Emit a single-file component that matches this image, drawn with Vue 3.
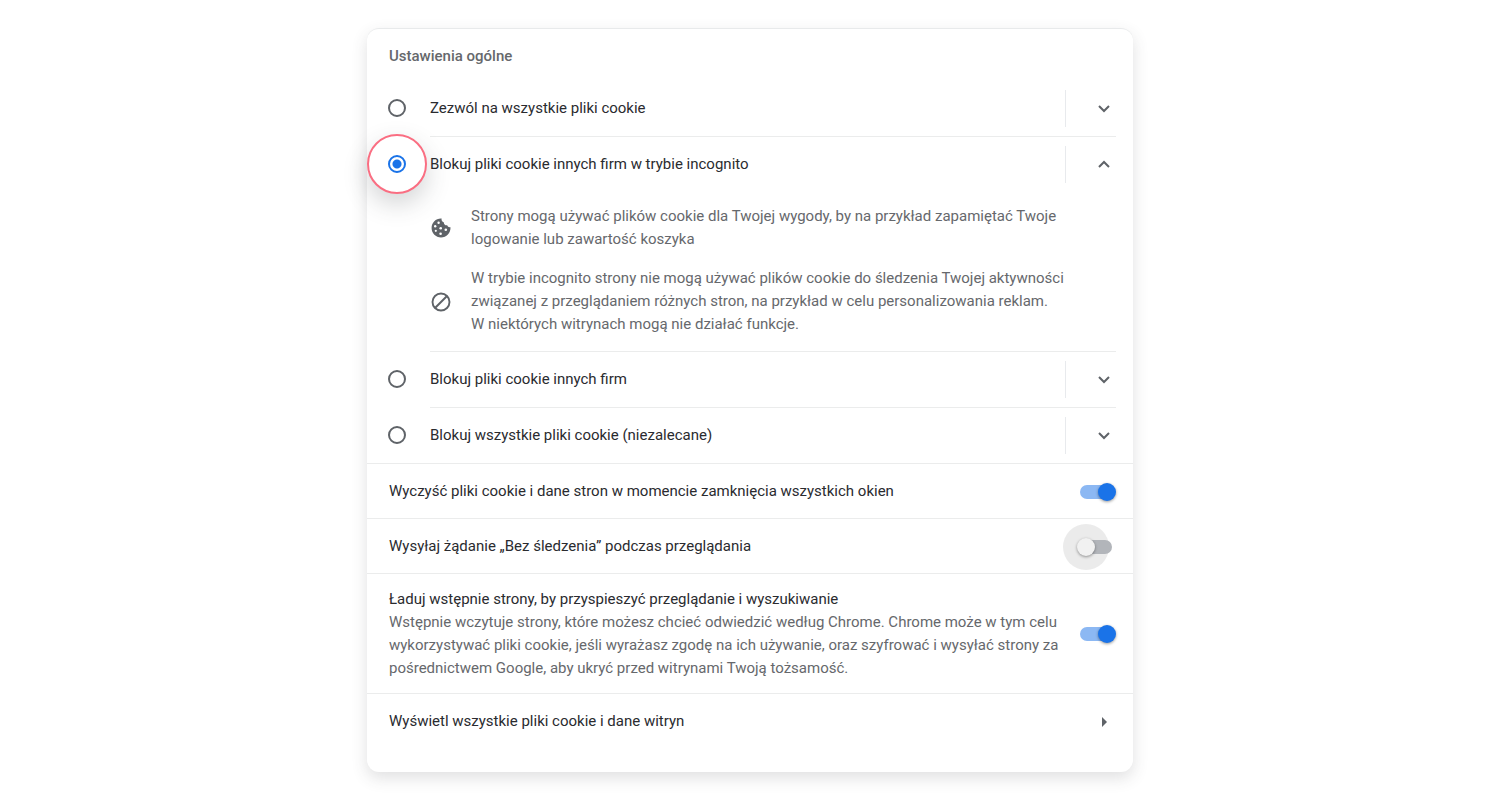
<script setup>
import { ref } from 'vue'

const selected = ref('incognito')
const expanded = ref('incognito')

const options = [
  { id: 'all', label: 'Zezwól na wszystkie pliki cookie' },
  {
    id: 'incognito',
    label: 'Blokuj pliki cookie innych firm w trybie incognito',
    details: [
      {
        icon: 'cookie',
        lines: [
          'Strony mogą używać plików cookie dla Twojej wygody, by na przykład zapamiętać Twoje',
          'logowanie lub zawartość koszyka',
        ],
      },
      {
        icon: 'block',
        lines: [
          'W trybie incognito strony nie mogą używać plików cookie do śledzenia Twojej aktywności',
          'związanej z przeglądaniem różnych stron, na przykład w celu personalizowania reklam.',
          'W niektórych witrynach mogą nie działać funkcje.',
        ],
      },
    ],
  },
  { id: 'third-party', label: 'Blokuj pliki cookie innych firm' },
  { id: 'none', label: 'Blokuj wszystkie pliki cookie (niezalecane)' },
]

const toggles = ref([
  { id: 'clear', label: 'Wyczyść pliki cookie i dane stron w momencie zamknięcia wszystkich okien', on: true },
  { id: 'dnt', label: 'Wysyłaj żądanie „Bez śledzenia” podczas przeglądania', on: false },
  {
    id: 'preload',
    label: 'Ładuj wstępnie strony, by przyspieszyć przeglądanie i wyszukiwanie',
    lines: [
      'Wstępnie wczytuje strony, które możesz chcieć odwiedzić według Chrome. Chrome może w tym celu',
      'wykorzystywać pliki cookie, jeśli wyrażasz zgodę na ich używanie, oraz szyfrować i wysyłać strony za',
      'pośrednictwem Google, aby ukryć przed witrynami Twoją tożsamość.',
    ],
    on: true,
  },
])

function toggleDetails(id) {
  expanded.value = expanded.value === id ? '' : id
}
</script>

<template>
  <main class="card">
    <h2 class="title">Ustawienia ogólne</h2>

    <section class="options">
      <div v-for="option in options" :key="option.id" class="option">
        <div class="option-row">
          <span class="radio-slot" :class="{ marked: selected === option.id }">
            <input :id="option.id" v-model="selected" class="radio" type="radio" name="cookies" :value="option.id" />
          </span>
          <label class="option-label" :for="option.id">{{ option.label }}</label>
          <button
            class="expand"
            type="button"
            :aria-label="option.label"
            :aria-expanded="expanded === option.id"
            @click="toggleDetails(option.id)"
          >
            <svg width="24" height="24" viewBox="0 0 24 24" fill="none" stroke="#5f6368" stroke-width="2">
              <path v-if="expanded === option.id" d="M7 14l5-5 5 5" />
              <path v-else d="M7 9l5 5 5-5" />
            </svg>
          </button>
        </div>
        <div v-if="option.details && expanded === option.id" class="details">
          <div v-for="detail in option.details" :key="detail.icon" class="detail">
            <svg v-if="detail.icon === 'cookie'" class="detail-icon" viewBox="0 0 20 20">
              <path
                fill="#5f6368"
                d="M19.500 9.200c-1.500.4-2.900-.5-3.300-1.900-1.900.3-3.400-1.100-3.300-2.900-1.700-.4-2.700-2-2.300-3.800C5.200.2.600 4.500.600 10c0 5.200 4.200 9.400 9.400 9.400 5.500 0 9.800-4.600 9.500-10.200z"
              />
              <g fill="#fff">
                <circle cx="7.600" cy="4.800" r="1.200" />
                <circle cx="4.200" cy="8.200" r="1.200" />
                <circle cx="9.700" cy="10.300" r="1.300" />
                <circle cx="14.800" cy="11.800" r="1.300" />
                <circle cx="4.800" cy="12.800" r="1.100" />
                <circle cx="9.600" cy="15.800" r="1.300" />
              </g>
            </svg>
            <svg v-else class="detail-icon" viewBox="0 0 20 20" fill="none" stroke="#5f6368" stroke-width="1.900">
              <circle cx="10" cy="10" r="8.500" />
              <path d="M4 16L16 4" />
            </svg>
            <p class="muted"><template v-for="line in detail.lines" :key="line">{{ line }}<br /></template></p>
          </div>
        </div>
      </div>
    </section>

    <section v-for="item in toggles" :key="item.id" class="setting">
      <div class="setting-text">
        <label :for="item.id">{{ item.label }}</label>
        <p v-if="item.lines" class="muted"><template v-for="line in item.lines" :key="line">{{ line }}<br /></template></p>
      </div>
      <span class="switch-box" :class="{ off: !item.on }">
        <input :id="item.id" v-model="item.on" class="switch" type="checkbox" role="switch" />
      </span>
    </section>

    <a class="setting link" href="#">
      <span>Wyświetl wszystkie pliki cookie i dane witryn</span>
      <svg class="arrow" width="24" height="24" viewBox="0 0 24 24" fill="#5f6368"><path d="M10 7l5 5-5 5z" /></svg>
    </a>
  </main>
</template>

<style>
body {
  background: #fff;
}
</style>

<style scoped>
* {
  box-sizing: border-box;
}
.card {
  max-width: 766px;
  margin: 28px auto;
  padding-bottom: 24px;
  border-top: 1px solid #e8eaeb;
  border-radius: 12px;
  background: #fff;
  box-shadow: 0 6px 16px rgba(60, 64, 67, 0.16);
  color: #2a2b2f;
  font-family: Roboto, "Liberation Sans", sans-serif;
  font-size: 15px;
  line-height: 23px;
}
.title {
  margin: 0;
  padding: 16px 22px 13px;
  color: #66686c;
  font-size: 15px;
  font-weight: 500;
  line-height: 23px;
}
.option {
  margin: 0 17px 0 63px;
  border-bottom: 1px solid #ebecec;
}
.option:last-child {
  border-bottom: 0;
}
.option-row {
  display: flex;
  align-items: center;
  height: 55px;
  margin-left: -63px;
}
.radio-slot {
  display: flex;
  flex: none;
  align-items: center;
  justify-content: center;
  width: 60px;
  height: 60px;
  margin: 0 3px 2px 0;
  border: 2px solid transparent;
  border-radius: 50%;
}
.radio-slot.marked {
  border-color: #fa6e82;
  background: #fff;
  box-shadow: 0 10px 24px rgba(60, 64, 67, 0.22);
}
.radio {
  width: 18px;
  height: 18px;
  margin: 0;
  border: 2px solid #5f6368;
  border-radius: 50%;
  appearance: none;
}
.radio:checked {
  border-color: #1a73e8;
  background: radial-gradient(circle, #1a73e8 4px, transparent 5px);
}
.option-label {
  flex: 1;
}
.expand {
  display: flex;
  align-items: center;
  justify-content: flex-end;
  width: 51px;
  height: 37px;
  padding: 0;
  border: 0;
  border-left: 1px solid #e8eaed;
  background: none;
}
.details {
  display: flex;
  flex-direction: column;
  gap: 16px;
  padding: 13px 0 15px;
}
.detail {
  display: flex;
  align-items: center;
  gap: 20px;
}
.detail-icon {
  flex: none;
  width: 20px;
  height: 20px;
  margin-left: 1px;
}
.muted {
  margin: 0;
  color: #66686c;
}
.setting {
  display: flex;
  align-items: center;
  justify-content: space-between;
  min-height: 55px;
  padding: 14px 17px 13px 22px;
  border-top: 1px solid #ebecec;
}
.setting-text {
  flex: 1;
}
.switch-box {
  position: relative;
  display: flex;
  flex: none;
}
.switch-box.off::before {
  position: absolute;
  top: -14px;
  left: -17px;
  width: 46px;
  height: 46px;
  border-radius: 50%;
  background: #ebebeb;
  content: "";
}
.switch {
  position: relative;
  width: 36px;
  height: 18px;
  margin: 0;
  appearance: none;
}
.switch::before {
  position: absolute;
  inset: 2px 4px 2px 0;
  border-radius: 7px;
  background: #8cb8f3;
  content: "";
}
.switch::after {
  position: absolute;
  top: 0;
  right: 0;
  width: 18px;
  height: 18px;
  border-radius: 50%;
  background: #1a73e8;
  box-shadow: 0 1px 3px rgba(0, 0, 0, 0.4);
  content: "";
}
.switch:not(:checked)::before {
  background: #b2b5ba;
}
.switch:not(:checked)::after {
  right: 21px;
  background: #f1f1f1;
}
.link {
  color: inherit;
  text-decoration: none;
}
</style>
